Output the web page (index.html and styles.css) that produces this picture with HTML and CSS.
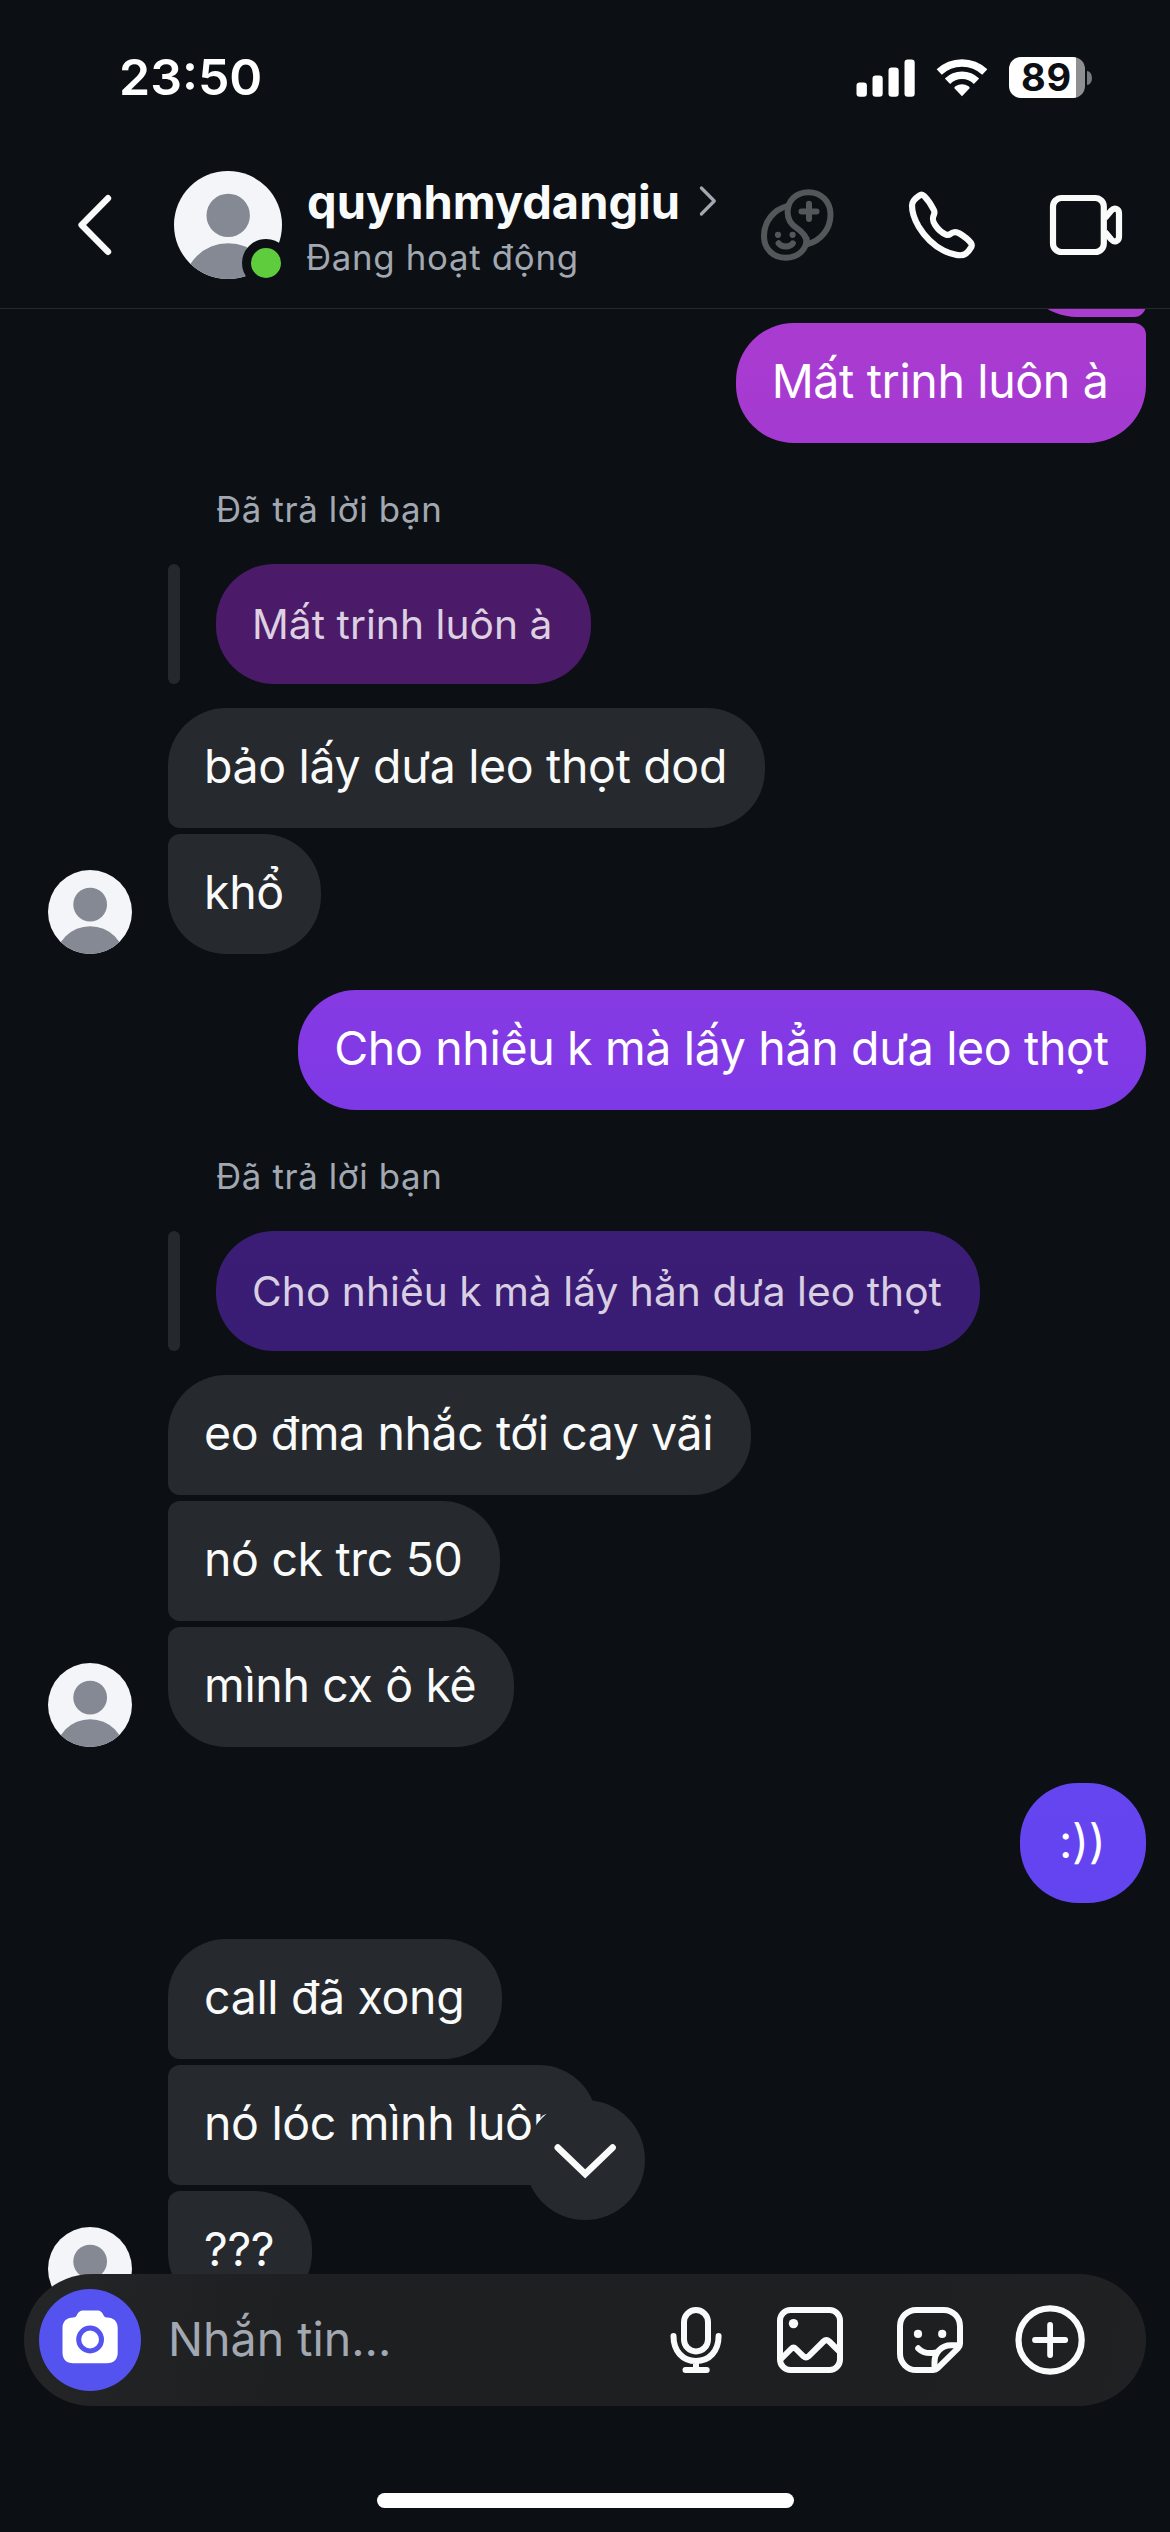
FILE: index.html
```html
<!DOCTYPE html>
<html lang="vi">
<head>
<meta charset="utf-8">
<title>quynhmydangiu</title>
<link rel="stylesheet" href="styles.css">
</head>
<body>
<svg class="defs" aria-hidden="true">
  <symbol id="person" viewBox="0 0 108 108">
    <clipPath id="disc"><circle cx="54" cy="54" r="54"/></clipPath>
    <circle cx="54" cy="54" r="54" fill="#f3f5f8"/>
    <g clip-path="url(#disc)" fill="#858994">
      <circle cx="54.2" cy="44.4" r="21.7"/>
      <circle cx="54.2" cy="116.8" r="44.6"/>
    </g>
  </symbol>
</svg>
<div class="screen">
  <div class="status">
    <span class="clock">23:50</span>
    <div class="status-icons">
      <svg class="signal" width="59" height="38" viewBox="855.5 58.5 59 38" fill="#fff">
        <rect x="856" y="82" width="10.4" height="14.2" rx="3.2"/>
        <rect x="872" y="75" width="10.2" height="21.2" rx="3.2"/>
        <rect x="888" y="67" width="10.2" height="29.2" rx="3.2"/>
        <rect x="904" y="59" width="10.2" height="37.2" rx="3.2"/>
      </svg>
      <svg class="wifi" width="52" height="39" viewBox="935.6 58 52 39">
        <g fill="none" stroke="#fff">
          <path d="M938.8 72 A33.2 33.2 0 0 1 984.4 72" stroke-width="7.4"/>
          <path d="M947.1 81.2 A20.8 20.8 0 0 1 976.1 81.2" stroke-width="7.6"/>
        </g>
        <path d="M961.6 96.2 L954 88.2 Q953.6 87 955 86.2 Q961.6 82.4 968.2 86.2 Q969.6 87 969.2 88.2 Z" fill="#fff"/>
      </svg>
      <div class="battery"><span class="battery-body">89</span><span class="battery-cap"></span></div>
    </div>
  </div>

  <header class="header">
    <svg class="back" width="38" height="66" viewBox="75 192 38 66" fill="none" stroke="#f9fafa" stroke-width="6.4" stroke-linecap="round" stroke-linejoin="round"><path d="M108 198.2 81.6 225 108 251.8"/></svg>
    <div class="peer">
      <svg width="108" height="108"><use href="#person"/></svg>
      <span class="online"></span>
    </div>
    <div class="title">
      <div class="name">quynhmydangiu
        <svg width="20" height="36" viewBox="699 183 20 36" fill="none" stroke="#a2a8b2" stroke-width="3.2" stroke-linecap="round" stroke-linejoin="round"><path d="M702.4 188 715.3 201 702.4 214"/></svg>
      </div>
      <div class="presence">Đang hoạt động</div>
    </div>
    <div class="actions">
      <svg width="79" height="78" viewBox="757 186 79 78" fill="none" stroke="#53575a" stroke-width="6" stroke-linecap="round" stroke-linejoin="round">
        <path d="M806.5 244.2C820 240.5 829.5 229 829.5 214.5 829.5 201.500 820 192.200 807.300 192.200 795 192.200 786.600 201 786.600 212 786.600 219.500 790 224.500 796 228.300 802.500 232.500 805.600 236.500 805.600 243"/>
        <path d="M786.800 205.800C772.500 209.500 763 221.500 763 236 763 248.800 772 257.800 784.800 257.800 797.500 257.800 805.700 249 805.700 239"/>
        <path d="M808 203.800V219M800.500 211.400H815.500"/>
        <path d="M777.600 243.300C781 247.500 789 247.500 791.800 243.300"/>
        <g fill="#53575a" stroke="none"><circle cx="777" cy="234.800" r="3.1"/><circle cx="791.600" cy="234.800" r="3.1"/></g>
      </svg>
      <svg width="72" height="72" viewBox="906 189 72 72" fill="none" stroke="#f9fafa" stroke-width="6.2" stroke-linejoin="round">
        <path d="M919.300 195.600Q921.800 193.600 924.300 196.200C928.500 200.500 931.800 206 933.900 210.200Q935 212.300 933.800 215C932 219 932.700 221.300 935.300 225.300 938.300 229.800 942 233 946 234.600Q948.400 235.500 950.300 234C953.500 231.500 956.500 231.700 959.500 233.500 964 236.200 968.300 239.500 971 243Q972.300 245 971.300 247C969.600 250.200 967.500 252.300 965.500 253.900 961.500 256.600 952.500 255 943.500 250.500 934 245.500 925 237 918.500 226.300 914 218.500 912 210.500 912 205.500 912 201.500 914.500 198.800 919.300 195.600Z"/>
      </svg>
      <svg width="78" height="66" viewBox="1047 192 78 66" fill="none" stroke="#f9fafa" stroke-width="6.2" stroke-linejoin="round">
        <rect x="1053" y="198" width="50.800" height="54" rx="8.500"/>
        <path d="M1105 218 1111.300 210.500C1114.500 207 1119 208.700 1119 213.500V236.500C1119 241.300 1114.500 243 1111.300 239.500L1105 232"/>
      </svg>
    </div>
  </header>

  <main class="thread">
    <div class="bubble mine tone-0 tail-top clipped"></div>
    <div class="bubble mine tone-1 joined">Mất trinh luôn à</div>

    <div class="reply-label">Đã trả lời bạn</div>
    <div class="reply"><div class="bubble quote quote-1">Mất trinh luôn à</div></div>
    <div class="group after-quote">
      <svg class="avatar"><use href="#person"/></svg>
      <div class="stack">
        <div class="bubble">bảo lấy dưa leo thọt dod</div>
        <div class="bubble">khổ</div>
      </div>
    </div>

    <div class="bubble mine tone-2 spaced">Cho nhiều k mà lấy hẳn dưa leo thọt</div>

    <div class="reply-label">Đã trả lời bạn</div>
    <div class="reply"><div class="bubble quote quote-2">Cho nhiều k mà lấy hẳn dưa leo thọt</div></div>
    <div class="group after-quote">
      <svg class="avatar"><use href="#person"/></svg>
      <div class="stack">
        <div class="bubble tight">eo đma nhắc tới cay vãi</div>
        <div class="bubble">nó ck trc 50</div>
        <div class="bubble">mình cx ô kê</div>
      </div>
    </div>

    <div class="bubble mine tone-3 spaced short">:))</div>

    <div class="group spaced">
      <svg class="avatar"><use href="#person"/></svg>
      <div class="stack">
        <div class="bubble">call đã xong</div>
        <div class="bubble">nó lóc mình luôn</div>
        <div class="bubble">???</div>
      </div>
    </div>
  </main>

  <div class="to-bottom">
    <svg width="72" height="44" viewBox="549 2139 72 44" fill="none" stroke="#f9fafa" stroke-width="6.600" stroke-linecap="round" stroke-linejoin="miter"><path d="M557.800 2147.600 585.200 2174 612.600 2147.600"/></svg>
  </div>

  <footer class="composer">
    <div class="camera">
      <svg width="58" height="56" viewBox="61 2309 58 56">
        <path d="M84 2310.400H96.500C101 2310.400 102.300 2312.500 103.500 2315.200 104.300 2317 105.300 2317.400 107 2317.400 113.800 2317.400 117.700 2321.500 117.700 2328V2352.500C117.700 2359.400 113.800 2363.300 107 2363.300H73.200C66.400 2363.300 62.500 2359.400 62.500 2352.500V2328C62.500 2321.500 66.400 2317.400 73.200 2317.400 75 2317.400 76 2317 76.800 2315.200 78 2312.500 79.500 2310.400 84 2310.400Z" fill="#fff"/>
        <circle cx="90.100" cy="2339.500" r="11.400" fill="#fff" stroke="#5553ef" stroke-width="5"/>
      </svg>
    </div>
    <span class="placeholder">Nhắn tin...</span>
    <div class="tools">
      <svg width="54" height="72" viewBox="669 2304 54 72" fill="none" stroke="#f9fafa" stroke-width="6" stroke-linecap="round">
        <rect x="684" y="2310" width="24" height="41.500" rx="12"/>
        <path d="M673.500 2336C673.500 2351 682.500 2361 696 2361 709.500 2361 718.600 2351 718.600 2336M696 2361V2370M685.500 2370H706.700"/>
      </svg>
      <svg width="72" height="72" viewBox="774 2304 72 72" fill="none" stroke="#f9fafa" stroke-width="6" stroke-linejoin="round">
        <rect x="780" y="2310" width="60" height="60" rx="10.500"/>
        <circle cx="793.500" cy="2323.600" r="4.700" fill="#f9fafa" stroke="none"/>
        <path d="M780.500 2359.500 791 2349Q793.500 2346.500 796 2349L803.500 2356.300Q806 2358.500 808.500 2356.300L823.500 2341.500Q826.300 2338.800 829.300 2341.500L839.500 2351.500"/>
      </svg>
      <svg width="72" height="72" viewBox="894 2304 72 72" fill="none" stroke="#f9fafa" stroke-width="6" stroke-linejoin="round">
        <path d="M933.300 2370H916.200A16.200 16.200 0 0 1 900 2353.800V2326.200A16.200 16.200 0 0 1 916.200 2310H943.800A16.200 16.200 0 0 1 960 2326.200V2343.800A6.200 6.200 0 0 1 958.100 2348.200L937.700 2368.200A6.200 6.200 0 0 1 933.300 2370Z"/>
        <g fill="#f9fafa" stroke="none"><circle cx="918" cy="2333.900" r="4.100"/><circle cx="942.200" cy="2333.900" r="4.100"/></g>
        <path d="M918.200 2348.300C922.500 2352.600 928 2354 935 2352.600" stroke-linecap="round"/>
        <path d="M959 2345.300H951C941.500 2345.300 934.500 2352.800 934.500 2362V2369"/>
      </svg>
      <svg width="72" height="72" viewBox="1014 2304 72 72" fill="none" stroke="#f9fafa" stroke-width="6.200" stroke-linecap="round">
        <circle cx="1050.100" cy="2340" r="31.600"/>
        <path d="M1050.100 2325V2355M1035 2340H1065.200" stroke-width="5.800"/>
      </svg>
    </div>
  </footer>

  <div class="home"></div>
</div>
</body>
</html>
```
FILE: styles.css
```css
* { box-sizing: border-box; }

body {
  margin: 0;
  background: #0c1014;
  color: #f9fafa;
  font-family: Inter, "Noto Sans", sans-serif;
}

svg { display: block; flex: none; }

.defs { position: absolute; width: 0; height: 0; }

.screen {
  position: relative;
  display: flex;
  flex-direction: column;
  width: 1170px;
  height: 2532px;
  overflow: hidden;
}

/* Status bar */
.status {
  display: flex;
  align-items: center;
  justify-content: space-between;
  height: 142px;
  padding: 13px 78px 0 119px;
}

.clock {
  font-size: 50px;
  font-weight: 600;
  line-height: 60px;
  color: #fff;
  margin-bottom: 1px;
}

.status-icons { display: flex; align-items: center; }
.wifi { margin-left: 21px; }

.battery {
  display: flex;
  align-items: center;
  margin-left: 21px;
}

.battery-body {
  width: 76px;
  height: 41px;
  border-radius: 12px;
  background: linear-gradient(to right, #fff 67px, #8e8f91 67px);
  color: #0c1014;
  font-size: 38px;
  font-weight: 700;
  line-height: 41px;
  letter-spacing: 0.8px;
  padding-left: 12px;
}

.battery-cap {
  width: 5px;
  height: 14px;
  margin-left: 2px;
  border-radius: 0 5px 5px 0 / 0 7px 7px 0;
  background: #77797b;
}

/* Conversation header */
.header {
  display: flex;
  align-items: center;
  height: 167px;
  padding: 0 45px 0 75px;
  border-bottom: 1px solid #25282c;
  flex: none;
}

.peer { position: relative; margin-left: 61px; }

.online {
  position: absolute;
  left: 68px;
  top: 68px;
  width: 48px;
  height: 48px;
  border: 9px solid #0c1014;
  border-radius: 50%;
  background: #5fcc3d;
}

.title { margin-left: 25px; }

.name {
  display: flex;
  align-items: center;
  font-size: 47px;
  font-weight: 700;
  line-height: 59px;
  gap: 18px;
}

.presence {
  margin: 4px 0 0 -1px;
  font-size: 34.8px;
  line-height: 44px;
  letter-spacing: 0.7px;
  color: #a2a8b2;
}

.actions {
  display: flex;
  align-items: center;
  gap: 69px;
  margin-left: auto;
}

/* Messages */
.thread {
  display: flex;
  flex-direction: column;
  flex: 1;
  min-height: 0;
  overflow: hidden;
}

.bubble {
  flex: none;
  height: 120px;
  padding: 0 37.5px 4px 36px;
  border-radius: 58px;
  background: #26292e;
  font-size: 46.5px;
  line-height: 116px;
  letter-spacing: -0.35px;
  white-space: nowrap;
}

.tight { letter-spacing: -0.43px; }

.mine {
  align-self: flex-end;
  margin-right: 24px;
  color: #fff;
}

.clipped { width: 127px; margin-top: -112px; border-bottom-right-radius: 12px; }
.joined { margin-top: 6px; border-top-right-radius: 12px; }
.spaced { margin-top: 36px; }
.short { width: 126px; padding: 0 0 4px 39px; }

.tone-0 { background: #ac3bcf; }
.tone-1 { background: linear-gradient(#aa3bd0, #a43ad1); }
.tone-2 { background: linear-gradient(#863ae2, #7d39e7); }
.tone-3 { background: linear-gradient(#6545f0, #6244f0); }

.reply-label {
  flex: none;
  height: 40px;
  margin: 46px 0 35px 216px;
  font-size: 34.8px;
  line-height: 40px;
  letter-spacing: 0.65px;
  color: #a2a8b2;
}

.reply {
  display: flex;
  flex: none;
  margin-left: 168px;
  gap: 36px;
}

.reply::before {
  content: "";
  width: 12px;
  border-radius: 6px;
  background: #25282d;
}

.quote {
  padding: 0 38.5px 0 36px;
  font-size: 40.7px;
  line-height: 121px;
  letter-spacing: 0.05px;
}

.quote-1 { background: #4b1a68; color: #dcd0e1; }
.quote-2 { background: linear-gradient(#3b1d75, #391c73); color: #d9cfe2; }

.group {
  display: flex;
  flex: none;
  align-items: flex-end;
  gap: 36px;
  padding-left: 48px;
}

.after-quote { margin-top: 24px; }
.avatar { width: 84px; height: 84px; }

.stack {
  display: flex;
  flex-direction: column;
  align-items: flex-start;
  gap: 6px;
}

.stack .bubble:not(:first-child) { border-top-left-radius: 12px; }
.stack .bubble:not(:last-child) { border-bottom-left-radius: 12px; }

/* Floating controls over the thread */
.to-bottom {
  position: absolute;
  left: 525px;
  top: 2100px;
  display: flex;
  align-items: center;
  justify-content: center;
  width: 120px;
  height: 120px;
  padding-top: 2px;
  border-radius: 50%;
  background: #26292e;
}

.composer {
  position: absolute;
  left: 24px;
  right: 24px;
  bottom: 126px;
  display: flex;
  align-items: center;
  height: 132px;
  padding: 0 60px 0 15px;
  border-radius: 68px / 66px;
  background: linear-gradient(100deg, #242526, #1e1f21 24%, #1e1f21 76%, #202122);
}

.camera {
  display: flex;
  align-items: center;
  justify-content: center;
  width: 102px;
  height: 102px;
  padding-bottom: 6px;
  border-radius: 50%;
  background: #5553ef;
}

.placeholder {
  margin: 0 0 2px 27px;
  font-size: 46.5px;
  line-height: 60px;
  color: #a2a8b2;
}

.tools {
  display: flex;
  align-items: center;
  gap: 48px;
  margin-left: auto;
}

.tools svg:first-child { margin-right: 3px; }

.home {
  position: absolute;
  left: 377px;
  bottom: 24px;
  width: 417px;
  height: 15px;
  border-radius: 8px;
  background: #fff;
}
```
